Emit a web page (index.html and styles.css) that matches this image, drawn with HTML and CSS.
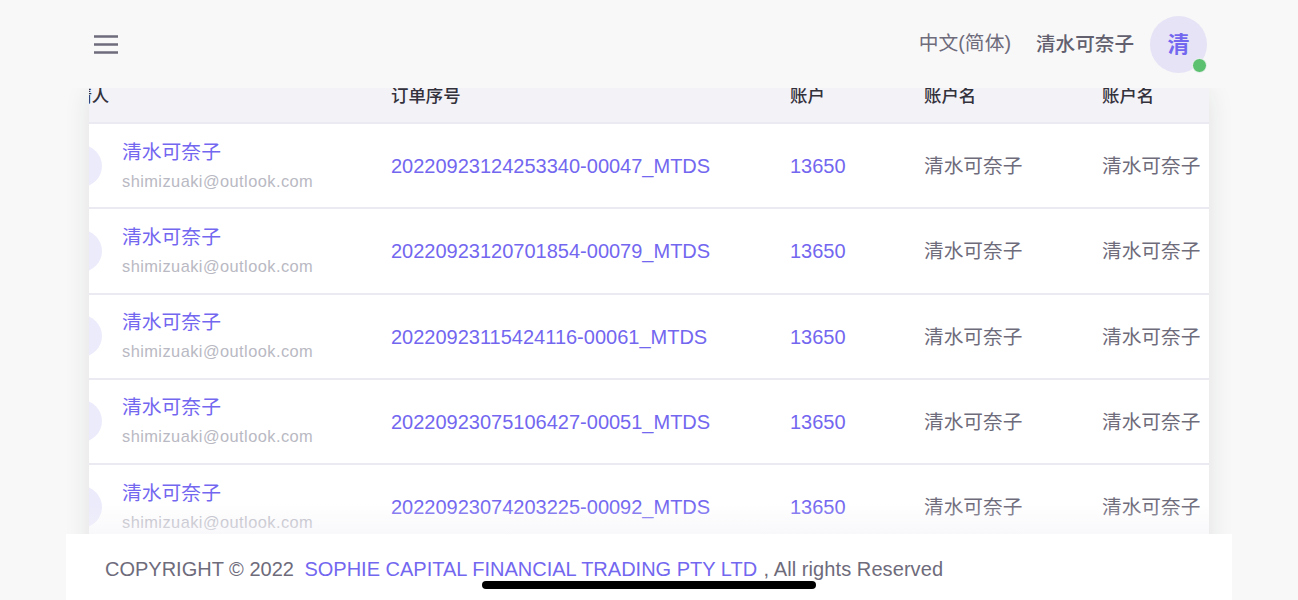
FILE: index.html
```html
<!DOCTYPE html>
<html lang="zh-CN">
<head>
<meta charset="utf-8">
<title>订单</title>
<link rel="stylesheet" href="styles.css">
</head>
<body>
<div class="shell">
  <header class="navbar">
    <svg class="menu-icon" width="24" height="19" viewBox="0 0 24 19" aria-hidden="true"><path d="M0 1.5h24M0 9.5h24M0 17.5h24" fill="none" stroke="#6e6b7b" stroke-width="2.6"/></svg>
    <div class="nav-right">
      <span class="lang">中文(简体)</span>
      <span class="user">清水可奈子</span>
      <span class="avatar"><span class="avatar-char">清</span><i class="status"></i></span>
    </div>
  </header>
  <main class="content">
    <section class="card">
      <table class="orders">
        <colgroup><col class="c1"><col class="c2"><col class="c3"><col class="c4"><col class="c5"></colgroup>
        <thead>
          <tr><th class="first">申请人</th><th>订单序号</th><th>账户</th><th>账户名</th><th>账户名</th></tr>
        </thead>
        <tbody>
          <tr>
            <td><div class="person"><span class="dot"></span><div><div class="pname">清水可奈子</div><div class="email">shimizuaki@outlook.com</div></div></div></td>
            <td class="link">20220923124253340-00047_MTDS</td><td class="link">13650</td><td class="plain">清水可奈子</td><td class="plain">清水可奈子</td>
          </tr>
          <tr>
            <td><div class="person"><span class="dot"></span><div><div class="pname">清水可奈子</div><div class="email">shimizuaki@outlook.com</div></div></div></td>
            <td class="link">20220923120701854-00079_MTDS</td><td class="link">13650</td><td class="plain">清水可奈子</td><td class="plain">清水可奈子</td>
          </tr>
          <tr>
            <td><div class="person"><span class="dot"></span><div><div class="pname">清水可奈子</div><div class="email">shimizuaki@outlook.com</div></div></div></td>
            <td class="link">20220923115424116-00061_MTDS</td><td class="link">13650</td><td class="plain">清水可奈子</td><td class="plain">清水可奈子</td>
          </tr>
          <tr>
            <td><div class="person"><span class="dot"></span><div><div class="pname">清水可奈子</div><div class="email">shimizuaki@outlook.com</div></div></div></td>
            <td class="link">20220923075106427-00051_MTDS</td><td class="link">13650</td><td class="plain">清水可奈子</td><td class="plain">清水可奈子</td>
          </tr>
          <tr>
            <td><div class="person"><span class="dot"></span><div><div class="pname">清水可奈子</div><div class="email">shimizuaki@outlook.com</div></div></div></td>
            <td class="link">20220923074203225-00092_MTDS</td><td class="link">13650</td><td class="plain">清水可奈子</td><td class="plain">清水可奈子</td>
          </tr>
        </tbody>
      </table>
    </section>
    <div class="fade"></div>
  </main>
  <footer class="footer">
    <span>COPYRIGHT © 2022</span><a class="company">SOPHIE CAPITAL FINANCIAL TRADING PTY LTD</a><span class="rights">, All rights Reserved</span>
  </footer>
</div>
<div class="home-bar"></div>
</body>
</html>
```
FILE: styles.css
```css
* { box-sizing: border-box; }
html, body { height: 100%; margin: 0; overflow: hidden; }
body {
  background: #f8f8f8;
  color: #6e6b7b;
  font-family: "Liberation Sans", "Noto Sans CJK SC", sans-serif;
}
.shell {
  width: 1166px;
  height: 600px;
  margin: 0 auto;
  display: flex;
  flex-direction: column;
}
.navbar {
  flex: 0 0 88px;
  display: flex;
  align-items: center;
  justify-content: space-between;
  padding: 0 25px 0 28px;
  background: #f8f8f9;
  position: relative;
  z-index: 2;
}
.menu-icon { display: block; }
.nav-right { display: flex; align-items: center; }
.lang { font-size: 19.8px; margin-right: 25px; padding-bottom: 5px; }
.user { font-size: 19.6px; font-weight: 500; margin-right: 16px; color: #625f6e; padding-bottom: 4px; }
.avatar {
  position: relative;
  width: 57px;
  height: 57px;
  border-radius: 50%;
  background: #e5e3f5;
  color: #7367f0;
  font-size: 22px;
  font-weight: 700;
  display: flex;
  align-items: center;
  justify-content: center;
}
.avatar-char { padding-bottom: 4px; }
.status {
  position: absolute;
  right: 0;
  bottom: 0;
  width: 15px;
  height: 15px;
  border-radius: 50%;
  background: #5bc06f;
  border: 1.5px solid #f4f4f8;
}
.content {
  flex: 1;
  min-height: 0;
  overflow: hidden;
  padding: 0 23px;
  position: relative;
}
.card {
  height: 600px;
  background: #fff;
  overflow: hidden;
  box-shadow: 0 4px 24px rgba(34, 41, 47, .1);
}
.orders {
  table-layout: fixed;
  width: 1173px;
  margin: -20px 0 0 -40px;
  border-collapse: separate;
  border-spacing: 0;
}
.c1 { width: 342px; }
.c2 { width: 399px; }
.c3 { width: 134px; }
.c4 { width: 178px; }
.c5 { width: 120px; }
th {
  height: 56px;
  padding: 0 0 2px;
  background: #f3f2f7;
  border-bottom: 2px solid #ebe9f1;
  color: #33313b;
  font-size: 17.4px;
  font-weight: 500;
  text-align: left;
}
th.first { padding-left: 8px; }
td {
  height: 85.25px;
  padding: 0;
  border-bottom: 2px solid #ebe9f1;
  font-size: 20px;
  color: #6e6b7b;
}
.link { color: #7367f0; padding-top: 2px; }
.plain { font-size: 19.7px; padding-bottom: 2px; }
.person { display: flex; align-items: center; padding-left: 11px; gap: 20px; }
.dot {
  flex: none;
  width: 42px;
  height: 42px;
  border-radius: 50%;
  background: #ecebfb;
}
.pname { font-size: 19.8px; line-height: 26px; color: #7367f0; }
.email { font-size: 16.4px; line-height: 24px; margin-top: 4px; color: #b9b9c3; letter-spacing: .44px; }
.fade {
  position: absolute;
  left: 23px;
  right: 23px;
  bottom: 0;
  height: 30px;
  background: linear-gradient(to bottom, rgba(243, 242, 247, 0), rgba(243, 242, 247, .55));
}
.footer {
  flex: 0 0 66px;
  background: #fff;
  padding: 4px 0 0 39px;
  display: flex;
  align-items: center;
  font-size: 20px;
  position: relative;
  z-index: 2;
}
.company { color: #7367f0; margin: 0 6.5px 0 10.5px; }
.rights { letter-spacing: .08px; }
.home-bar {
  position: absolute;
  left: 482px;
  top: 581px;
  width: 334px;
  height: 8px;
  border-radius: 4px;
  background: #000;
  z-index: 5;
}
```
